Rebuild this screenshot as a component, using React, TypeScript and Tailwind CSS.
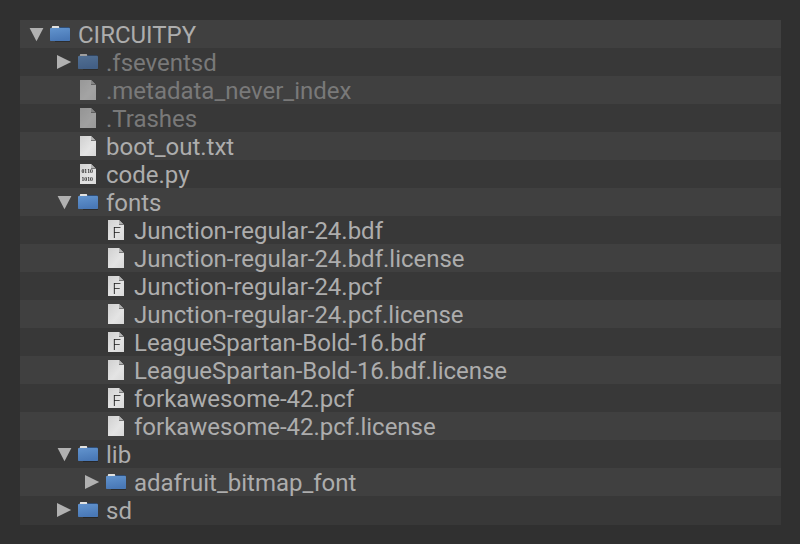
import React from "react";

type Kind = "folder" | "file" | "font" | "code";
type Row = { name: string; kind: Kind; depth: 0 | 1 | 2; arrow?: "open" | "closed"; dim?: boolean };

const rows: Row[] = [
  { name: "CIRCUITPY", kind: "folder", depth: 0, arrow: "open" },
  { name: ".fseventsd", kind: "folder", depth: 1, arrow: "closed", dim: true },
  { name: ".metadata_never_index", kind: "file", depth: 1, dim: true },
  { name: ".Trashes", kind: "file", depth: 1, dim: true },
  { name: "boot_out.txt", kind: "file", depth: 1 },
  { name: "code.py", kind: "code", depth: 1 },
  { name: "fonts", kind: "folder", depth: 1, arrow: "open" },
  { name: "Junction-regular-24.bdf", kind: "font", depth: 2 },
  { name: "Junction-regular-24.bdf.license", kind: "file", depth: 2 },
  { name: "Junction-regular-24.pcf", kind: "font", depth: 2 },
  { name: "Junction-regular-24.pcf.license", kind: "file", depth: 2 },
  { name: "LeagueSpartan-Bold-16.bdf", kind: "font", depth: 2 },
  { name: "LeagueSpartan-Bold-16.bdf.license", kind: "file", depth: 2 },
  { name: "forkawesome-42.pcf", kind: "font", depth: 2 },
  { name: "forkawesome-42.pcf.license", kind: "file", depth: 2 },
  { name: "lib", kind: "folder", depth: 1, arrow: "open" },
  { name: "adafruit_bitmap_font", kind: "folder", depth: 2, arrow: "closed" },
  { name: "sd", kind: "folder", depth: 1, arrow: "closed" },
];

const indent = ["pl-2", "pl-9", "pl-16"];

function Arrow({ dir }: { dir?: "open" | "closed" }) {
  return (
    <svg className="h-7 w-4 shrink-0" viewBox="0 0 16 28" fill="#b1b1b1">
      {dir === "open" && <path d="M1.6 8h13.8L8.5 21.2z" />}
      {dir === "closed" && <path d="M1 7.1v13.8L15.2 14z" />}
    </svg>
  );
}

function Icon({ kind }: { kind: Kind }) {
  if (kind === "folder")
    return (
      <svg className="h-7 w-6 shrink-0" viewBox="0 0 24 28">
        <defs>
          <linearGradient id="folder" x1="0" y1="0" x2="0.25" y2="1">
            <stop offset="0" stopColor="#6395d0" />
            <stop offset="1" stopColor="#4a79b8" />
          </linearGradient>
        </defs>
        <path d="M7 21h15v1H7z" fill="#000" opacity="0.3" />
        <path d="M10 7h11.4v3H10z" fill="#2f4f78" />
        <path d="M4.2 6h6.6l.6 2.4H3.6z" fill="#e4e4e2" />
        <rect x="2" y="8" width="20" height="13" rx="0.7" fill="url(#folder)" />
      </svg>
    );
  return (
    <svg className="h-7 w-6 shrink-0" viewBox="0 0 24 28">
      <defs>
        <linearGradient id="paper" x1="0" y1="0" x2="1" y2="1">
          <stop offset="0" stopColor="#d2d2d2" />
          <stop offset="0.6" stopColor="#e6e6e6" />
          <stop offset="1" stopColor="#dadada" />
        </linearGradient>
      </defs>
      <path d="M4 4h11l5 5v15H4z" fill="url(#paper)" />
      <path d="M15 4v5h5z" fill="#b4b4b4" />
      <path d="M15 8.5h5" stroke="#777" />
      {kind === "font" && (
        <text x="8.4" y="22" fontSize="15" fontWeight="300" fontFamily="Roboto, sans-serif" fill="#141414">F</text>
      )}
      {kind === "code" && (
        <g fontSize="5.5" fontFamily="'DejaVu Serif', serif" fontWeight="bold" fill="#2b2b2b" textAnchor="middle">
          <text x="11.2" y="13" textLength="11.5" lengthAdjust="spacingAndGlyphs">0110</text>
          <text x="11.2" y="21" textLength="11.5" lengthAdjust="spacingAndGlyphs">1010</text>
        </g>
      )}
    </svg>
  );
}

export default function App() {
  return (
    <main className="h-[544px] w-[800px] bg-[#303030] py-5 pl-5 pr-[19px]">
      <div className="flex h-[505px] flex-col bg-[#383838]">
        {rows.map((r) => (
          <div key={r.name} className={`flex h-7 items-center odd:bg-[#404040] even:bg-[#383838] ${indent[r.depth]}`}>
            <Arrow dir={r.arrow} />
            <span className={`ml-1 flex ${r.dim ? "opacity-60" : "opacity-[0.99] will-change-transform"}`}>
              <Icon kind={r.kind} />
            </span>
            <span
              className={`ml-1.5 whitespace-nowrap pt-0.5 font-['Roboto',sans-serif] text-[24px] leading-7 tracking-[-0.01px] ${
                r.dim ? "text-[#797979]" : "text-[#adadad]"
              }`}
            >
              {r.name}
            </span>
          </div>
        ))}
      </div>
    </main>
  );
}
